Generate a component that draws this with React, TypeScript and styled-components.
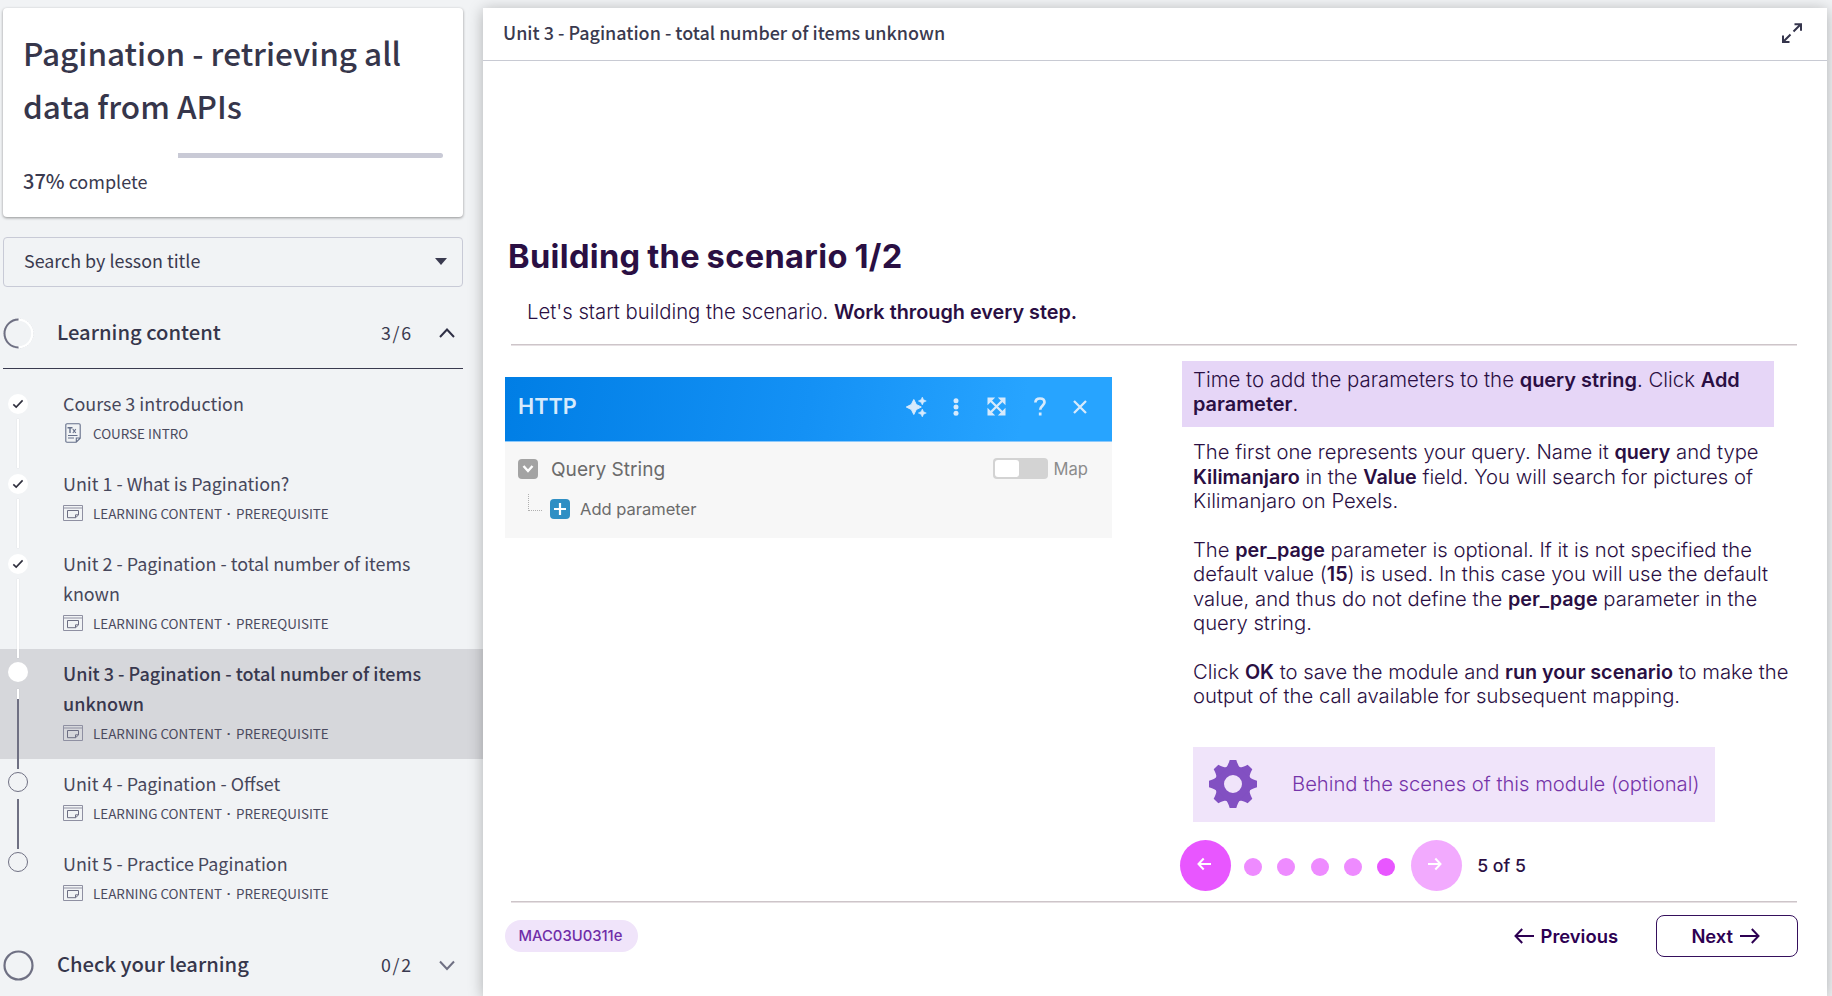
import React from "react";
import styled, { createGlobalStyle, css } from "styled-components";

const SANS = '"Noto Sans CJK SC", "Open Sans", sans-serif';
const INTER = 'Inter, "Liberation Sans", sans-serif';
const INK = "#3a3a4f";
const SLATE = "#6f7083";
const PLUM = "#2a0f43";
const MIST = "#f1f3f5";

const GlobalStyle = createGlobalStyle`
  * { box-sizing: border-box; }
  html, body, #root { height: 100%; }
  body { margin: 0; background: ${MIST}; overflow: hidden; }
  h1, h2, p { margin: 0; }
  svg { display: block; flex: none; }
`;

const Page = styled.div`
  display: flex;
  height: 996px;
  width: 1832px;
  padding: 8px 5px 0 0;
  overflow: hidden;
  color: ${INK};
  font-family: ${SANS};
`;

/* ---------- Sidebar ---------- */

const Sidebar = styled.aside`
  flex: none;
  width: 483px;
  display: flex;
  flex-direction: column;
  > * {
    flex: none;
  }
`;

const CourseCard = styled.section`
  width: 460px;
  height: 209px;
  margin-left: 3px;
  padding: 18px 20px 0 20px;
  background: #fff;
  border-radius: 4px;
  box-shadow: 0 1px 3px rgba(0, 0, 0, 0.4);
`;

const CourseTitle = styled.h1`
  font-size: 31.5px;
  line-height: 53px;
  font-weight: 500;
  color: #36364b;
  white-space: nowrap;
`;

const Progress = styled.div`
  display: flex;
  justify-content: flex-end;
  height: 5px;
  margin-top: 21px;
`;

const Remaining = styled.div`
  width: 265px;
  height: 5px;
  border-radius: 0 3px 3px 0;
  background: #c9cad6;
`;

const ProgressLabel = styled.p`
  margin-top: 8px;
  font-size: 18px;
  line-height: 30px;
  strong {
    font-size: 20px;
    font-weight: 500;
  }
`;

const Search = styled.div`
  display: flex;
  align-items: center;
  justify-content: space-between;
  width: 460px;
  height: 50px;
  margin: 20px 0 0 3px;
  padding: 0 15px 2px 20px;
  border: 1px solid #c8cad6;
  border-radius: 4px;
  font-size: 17.9px;
`;

const SearchLabel = styled.span`
  margin-bottom: 2px;
`;

const SectionHeader = styled.div<{ $open?: boolean }>`
  display: flex;
  align-items: center;
  width: 460px;
  padding-right: 8px;
  ${(p) =>
    p.$open
      ? css`
          height: 82px;
          margin: 0 0 10px 3px;
          padding-top: 11px;
          border-bottom: 1px solid ${INK};
        `
      : css`
          height: 60px;
          margin: 16px 0 0 3px;
        `}
`;

const SectionTitle = styled.h2`
  flex: 1;
  margin: 0 0 2px 23px;
  font-size: 20.2px;
  line-height: 30px;
  font-weight: 500;
  color: #36364b;
`;

const Count = styled.span`
  margin: 0 26px 2px 0;
  font-size: 17.8px;
  line-height: 30px;
  letter-spacing: 1.8px;
`;

const Lesson = styled.div<{ $active?: boolean }>`
  display: flex;
  width: 483px;
  padding: 9.5px 0 10.5px 8px;
  background: ${(p) => (p.$active ? "#d6d7db" : "transparent")};
`;

const Rail = styled.div`
  position: relative;
  flex: none;
  width: 20px;
  margin-right: 35px;
`;

const Marker = styled.div<{ $kind: "done" | "current" | "todo" }>`
  position: absolute;
  left: 0;
  top: ${(p) => (p.$kind === "done" ? 5.5 : 3)}px;
  width: 20px;
  height: 20px;
  display: grid;
  place-items: center;
  border-radius: 50%;
  background: ${(p) => (p.$kind === "todo" ? "transparent" : "#fff")};
  border: ${(p) => (p.$kind === "todo" ? `1px solid ${SLATE}` : "none")};
`;

const Connector = styled.div<{ $top: number; $length: number; $dark?: boolean }>`
  position: absolute;
  z-index: 1;
  left: 9px;
  top: ${(p) => p.$top}px;
  width: 2px;
  height: ${(p) => p.$length}px;
  background: ${(p) => (p.$dark ? SLATE : "#fff")};
  box-shadow: ${(p) => (p.$dark ? "none" : "0 0 1px rgba(90, 90, 110, 0.35)")};
`;

const LessonBody = styled.div`
  width: 375px;
  margin: -1px 0 1px;
`;

const LessonTitle = styled.div<{ $active?: boolean }>`
  font-size: ${(p) => (p.$active ? 18 : 17.92)}px;
  line-height: 30px;
  font-weight: ${(p) => (p.$active ? 500 : 400)};
  color: ${(p) => (p.$active ? "#38384e" : "#47475b")};
`;

const Meta = styled.div`
  display: flex;
  align-items: center;
  height: 30px;
  font-size: 13.43px;
  color: #4a4a5e;
  white-space: nowrap;
`;

const MetaIcon = styled.span`
  display: flex;
  justify-content: center;
  width: 20px;
  margin-right: 10px;
`;

const Dot = styled.span`
  width: 14px;
  padding-top: 2px;
  text-align: center;
  font-family: "Liberation Sans", sans-serif;
  font-weight: 700;
`;

/* ---------- Lesson panel ---------- */

const Panel = styled.main`
  position: relative;
  flex: 1;
  background: #fff;
  box-shadow: 0 2px 14px rgba(0, 0, 0, 0.28);
`;

const PanelHeader = styled.header`
  display: flex;
  align-items: center;
  justify-content: space-between;
  height: 53px;
  padding: 0 25px 3px 20px;
  border-bottom: 1px solid #c8cad3;
`;

const PanelTitle = styled.span`
  margin-bottom: 2px;
  font-size: 17.97px;
  font-weight: 500;
`;

const Slide = styled.div`
  padding: 175px 30px 0 22px;
  font-family: ${INTER};
  color: ${PLUM};
`;

const SlideTitle = styled.h2`
  padding-left: 3px;
  font-size: 32.6px;
  line-height: 40px;
  font-weight: 700;
  letter-spacing: 0.35px;
  word-spacing: -1.4px;
`;

const copy = css`
  font-size: 20.25px;
  line-height: 24.4px;
  font-weight: 300;
  white-space: nowrap;
  strong {
    font-weight: 600;
    font-size: 0.976em;
  }
`;

const Lead = styled.p`
  ${copy}
  margin: 23.5px 0 20px 22px;
  font-size: 20.31px;
`;

const Rule = styled.div`
  height: 2px;
  margin-left: 6px;
  background: #e6e0e3;
  border-top: 1px solid #cdc5c9;
`;

const Columns = styled.div`
  display: grid;
  grid-template-columns: 607px 1fr;
  column-gap: 70px;
  height: 555px;
`;

const Module = styled.section`
  margin-top: 31px;
  height: 161px;
  background: #f7f7f7;
  color: #6b6b6b;
`;

const ModuleBar = styled.div`
  display: flex;
  align-items: center;
  height: 65px;
  padding: 0 25px 5px 13px;
  background: linear-gradient(100deg, #007ee5 0%, #1491f5 50%, #27a4ff 85%, #27a4ff 100%);
  border-bottom: 1px solid #8cc9fb;
`;

const ModuleName = styled.span`
  flex: 1;
  font-size: 21.7px;
  font-weight: 600;
  color: #d6eafc;
`;

const ModuleTools = styled.div`
  display: flex;
  align-items: center;
  padding-top: 1px;
`;

const Tool = styled.span<{ $gap: number }>`
  margin-left: ${(p) => p.$gap}px;
`;

const QueryRow = styled.div`
  display: flex;
  align-items: center;
  height: 28px;
  margin-top: 13px;
  padding: 0 24px 0 13px;
  font-size: 19.1px;
`;

const QueryLabel = styled.span`
  flex: 1;
  margin-left: 13px;
`;

const Toggle = styled.span`
  width: 55px;
  height: 21px;
  margin-right: 6px;
  padding: 2px;
  border-radius: 4px;
  background: #d3d3d3;
  &::before {
    content: "";
    display: block;
    width: 24px;
    height: 17px;
    border-radius: 3px;
    background: #fff;
  }
`;

const MapLabel = styled.span`
  font-size: 16.6px;
  color: #8b8b8b;
`;

const AddRow = styled.div`
  display: flex;
  align-items: center;
  height: 24px;
  margin-top: 14px;
  padding-left: 23px;
  font-size: 16.5px;
`;

const Branch = styled.span`
  width: 14px;
  height: 17px;
  margin: 0 8px 12px 0;
  border: dotted #b0b0b0;
  border-width: 0 0 1px 1px;
`;

const AddLabel = styled.span`
  margin-left: 10px;
`;

const Square = styled.span<{ $color: string }>`
  display: grid;
  place-items: center;
  width: 20px;
  height: 20px;
  border-radius: 4px;
  background: ${(p) => p.$color};
`;

const Callout = styled.p`
  ${copy}
  width: 592px;
  height: 66px;
  margin-top: 15px;
  padding: 7px 11px;
  background: #e6d6f7;
  font-size: 20.42px;
`;

const Paragraph = styled.p`
  ${copy}
  margin: 13.5px 0 0 11px;
  & + & {
    margin-top: 24.4px;
  }
`;

const Behind = styled.div`
  display: flex;
  align-items: center;
  width: 522px;
  height: 75px;
  margin: 38px 0 0 11px;
  padding-left: 16px;
  background: #f0e4fa;
  color: #7534a9;
  font-size: 20.23px;
  font-weight: 300;
  white-space: nowrap;
`;

const BehindLabel = styled.span`
  margin: 0 0 1px 35px;
`;

const Pager = styled.div`
  display: flex;
  align-items: center;
  height: 51px;
  margin: 18px 0 0 -2.5px;
`;

const PagerButton = styled.span<{ $muted?: boolean }>`
  display: grid;
  place-items: center;
  width: 51px;
  height: 51px;
  padding: 0 3px 2px 0;
  border-radius: 50%;
  background: ${(p) => (p.$muted ? "#f2aafe" : "#e856ff")};
`;

const Steps = styled.div`
  display: flex;
  gap: 15.3px;
  margin: 3px 15.5px 0 13.5px;
`;

const Step = styled.span<{ $on?: boolean }>`
  width: 18px;
  height: 18px;
  border-radius: 50%;
  background: ${(p) => (p.$on ? "#e856ff" : "#ee8bff")};
`;

const PageCount = styled.span`
  margin-left: 15.5px;
  font-size: 17.7px;
  font-weight: 500;
`;

const Footer = styled.footer`
  display: flex;
  align-items: center;
  height: 67px;
`;

const Tag = styled.span`
  width: 133px;
  height: 32px;
  padding-right: 2px;
  border-radius: 16px;
  background: #f0e4fa;
  color: #6f2da8;
  font-size: 14.8px;
  line-height: 32px;
  font-weight: 500;
  text-align: center;
`;

const Previous = styled.span`
  display: flex;
  align-items: center;
  gap: 6.5px;
  margin: 0 38px 0 auto;
  font-size: 18.4px;
  font-weight: 600;
  color: #2d0052;
`;

const Next = styled(Previous)`
  justify-content: center;
  width: 142px;
  height: 42px;
  margin: 0 -1px 0 0;
  padding-right: 3px;
  border: 1.5px solid #35105c;
  border-radius: 8px;
`;

/* ---------- Icons ---------- */

const Check = () => (
  <svg width="12" height="12" viewBox="0 0 12 12" fill="none" stroke="#2f2f3d" strokeWidth="1.6">
    <path d="M1.3 6.3 4.2 9.1 10.6 2.4" />
  </svg>
);

const DocIcon = () => (
  <svg width="16" height="20" viewBox="0 0 16 20" fill="none" stroke="#66708a" strokeWidth="1.1">
    <path d="M2 .8h12q1.2 0 1.2 1.2v13.2l-4 4H2Q.8 19.2 .8 18V2Q.8.8 2 .8ZM15 15h-3.700v4" />
    <path d="M2.500 4.800h5M5 4.800v5.200" strokeWidth="1.400" />
    <path d="M7.800 6.200l3 3.800M10.800 6.200l-3 3.800M3 12.500h9.500M3 15h6" />
  </svg>
);

const ScreenIcon = () => (
  <svg width="20" height="16" viewBox="0 0 20 16" fill="none" stroke="#8f90a2" strokeWidth="1">
    <path d="M.5.5h19v15H.5ZM.5 3h19" />
    <path d="M4.500 5.500h11v4.500l-3 2.700h-8ZM15.500 9.800h-3v2.900" stroke="#6d6e83" />
  </svg>
);

const Chevron = ({ up }: { up?: boolean }) => (
  <svg width="16" height="11" viewBox="0 0 16 11" fill="none" stroke={up ? "#2f2f45" : SLATE} strokeWidth="2">
    <path d={up ? "M1 9 8 1.500l7 7.500" : "M1 1.500 8 9l7-7.500"} />
  </svg>
);

const HalfRing = () => (
  <svg width="31" height="31" viewBox="0 0 31 31" fill="none" strokeWidth="2">
    <circle cx="15.500" cy="15.500" r="14.600" stroke="#cfd1d8" strokeWidth="1" strokeDasharray="1 1.500" />
    <path d="M15.500 1.700a13.800 13.800 0 0 1 0 27.600" stroke="#fff" strokeWidth="2.200" />
    <path d="M15.500 1.500a14 14 0 0 0 0 28" stroke={SLATE} />
  </svg>
);

const Ring = () => (
  <svg width="31" height="31" viewBox="0 0 31 31" fill="none">
    <circle cx="15.500" cy="15.500" r="14" stroke={SLATE} strokeWidth="2.200" />
  </svg>
);

const Expand = () => (
  <svg width="20" height="20" viewBox="0 0 20 20" fill="none" stroke="#35354c" strokeWidth="2">
    <path d="M11.500 8.500 18.500 1.500M12.500 1.200H19V7.700M8.500 11.500 1.500 18.500M1 12.500V19H7.500" />
  </svg>
);

const Sparkles = () => (
  <svg width="21" height="20" viewBox="0 0 21 20" fill="#d6eafc">
    <path d="M7.800 2.500 10.300 7.500 15.300 10 10.300 12.500 7.800 17.500 5.300 12.500.3 10 5.300 7.500Z" stroke="#d6eafc" strokeLinejoin="round" />
    <path d="M16.300 0 17.600 2.700 20.300 4 17.600 5.300 16.300 8 15 5.300 12.300 4 15 2.700ZM16.300 12 17.600 14.700 20.300 16 17.600 17.300 16.300 20 15 17.300 12.300 16 15 14.700Z" stroke="#d6eafc" strokeWidth=".5" strokeLinejoin="round" />
  </svg>
);

const Dots = () => (
  <svg width="6" height="18" viewBox="0 0 6 18" fill="#d6eafc">
    <circle cx="3" cy="2.800" r="2.500" />
    <circle cx="3" cy="9" r="2.500" />
    <circle cx="3" cy="15.200" r="2.500" />
  </svg>
);

const Maximize = () => (
  <svg width="19" height="19" viewBox="0 0 19 19" fill="#d6eafc" stroke="#d6eafc" strokeWidth="2.300">
    <path d="M3 3 16 16M16 3 3 16" />
    <path d="M1.200 6.500V1.200H6.500ZM12.500 1.200h5.300V6.500ZM17.800 12.500v5.300H12.500ZM6.500 17.800H1.200V12.500Z" strokeWidth="1.400" />
  </svg>
);

const Question = () => (
  <svg width="12" height="19" viewBox="0 0 12 19" fill="none" stroke="#d6eafc" strokeWidth="2.700">
    <path d="M1.400 5.500C1.500 2.600 3.500 1.500 6 1.500c2.700 0 4.500 1.500 4.500 3.800C10.500 8.700 6.200 8.700 6.200 12.800M6.200 15.500v3" />
  </svg>
);

const Close = () => (
  <svg width="14" height="14" viewBox="0 0 14 14" fill="none" stroke="#d6eafc" strokeWidth="2.300">
    <path d="M1 1 13 13M13 1 1 13" />
  </svg>
);

const Gear = () => (
  <svg width="48" height="48" viewBox="-24 -24 48 48">
    <g fill="#8250c2">
      <path
        fillRule="evenodd"
        d="M0-18A18 18 0 1 1 0 18A18 18 0 1 1 0-18ZM0-9A9 9 0 1 0 0 9A9 9 0 1 0 0-9Z"
      />
      {[0, 45, 90, 135, 180, 225, 270, 315].map((angle) => (
        <path key={angle} transform={`rotate(${angle})`} d="M-7.500-16Q-5.200-17.500-3.300-24H3.300Q5.200-17.500 7.500-16Z" />
      ))}
    </g>
  </svg>
);

const Arrow = ({ left, size, color, weight }: { left?: boolean; size: number; color: string; weight: number }) => {
  const tip = size > 15 ? 7 : 5.5;
  return (
    <svg width={size} height="16" viewBox={`0 0 ${size} 16`} fill="none" stroke={color} strokeWidth={weight}>
      {left ? (
        <path d={`M1.500 8H${size}M${tip + 1.2} ${8 - tip} 1.500 8l${tip - 0.3} ${tip}`} />
      ) : (
        <path d={`M0 8H${size - 1.5}M${size - tip - 1.2} ${8 - tip} ${size - 1.5} 8l${0.3 - tip} ${tip}`} />
      )}
    </svg>
  );
};

/* ---------- Data ---------- */

type LessonData = {
  title: string;
  kind: "done" | "current" | "todo";
  intro?: boolean;
  lines: { top: number; length: number; dark?: boolean }[];
};

const lessons: LessonData[] = [
  { title: "Course 3 introduction", kind: "done", intro: true, lines: [{ top: 30.5, length: 49 }] },
  { title: "Unit 1 - What is Pagination?", kind: "done", lines: [{ top: 30.5, length: 49 }] },
  {
    title: "Unit 2 - Pagination - total number of items known",
    kind: "done",
    lines: [{ top: 30.5, length: 79 }],
  },
  {
    title: "Unit 3 - Pagination - total number of items unknown",
    kind: "current",
    lines: [
      { top: 30.5, length: 10 },
      { top: 40, length: 70, dark: true },
    ],
  },
  { title: "Unit 4 - Pagination - Offset", kind: "todo", lines: [{ top: 30.5, length: 50, dark: true }] },
  { title: "Unit 5 - Practice Pagination", kind: "todo", lines: [] },
];

export default function App() {
  return (
    <Page>
      <GlobalStyle />
      <Sidebar>
        <CourseCard>
          <CourseTitle>
            Pagination - retrieving all
            <br />
            data from APIs
          </CourseTitle>
          <Progress>
            <Remaining />
          </Progress>
          <ProgressLabel>
            <strong>37%</strong> complete
          </ProgressLabel>
        </CourseCard>
        <Search>
          <SearchLabel>Search by lesson title</SearchLabel>
          <svg width="12" height="7" viewBox="0 0 12 7">
            <path d="M0 0h12L6 7Z" fill={INK} />
          </svg>
        </Search>
        <SectionHeader $open>
          <HalfRing />
          <SectionTitle>Learning content</SectionTitle>
          <Count>3/6</Count>
          <Chevron up />
        </SectionHeader>
        {lessons.map((lesson) => {
          const active = lesson.kind === "current";
          return (
            <Lesson key={lesson.title} $active={active}>
              <Rail>
                <Marker $kind={lesson.kind}>{lesson.kind === "done" && <Check />}</Marker>
                {lesson.lines.map((line) => (
                  <Connector key={line.top} $top={line.top} $length={line.length} $dark={line.dark} />
                ))}
              </Rail>
              <LessonBody>
                <LessonTitle $active={active}>{lesson.title}</LessonTitle>
                <Meta>
                  <MetaIcon>{lesson.intro ? <DocIcon /> : <ScreenIcon />}</MetaIcon>
                  {lesson.intro ? (
                    "COURSE INTRO"
                  ) : (
                    <>
                      LEARNING CONTENT<Dot>·</Dot>PREREQUISITE
                    </>
                  )}
                </Meta>
              </LessonBody>
            </Lesson>
          );
        })}
        <SectionHeader>
          <Ring />
          <SectionTitle>Check your learning</SectionTitle>
          <Count>0/2</Count>
          <Chevron />
        </SectionHeader>
      </Sidebar>

      <Panel>
        <PanelHeader>
          <PanelTitle>Unit 3 - Pagination - total number of items unknown</PanelTitle>
          <Expand />
        </PanelHeader>
        <Slide>
          <SlideTitle>Building the scenario 1/2</SlideTitle>
          <Lead>
            Let's start building the scenario. <strong>Work through every step.</strong>
          </Lead>
          <Rule />
          <Columns>
            <Module>
              <ModuleBar>
                <ModuleName>HTTP</ModuleName>
                <ModuleTools>
                  <Tool $gap={0}><Sparkles /></Tool>
                  <Tool $gap={26}><Dots /></Tool>
                  <Tool $gap={28}><Maximize /></Tool>
                  <Tool $gap={28}><Question /></Tool>
                  <Tool $gap={27}><Close /></Tool>
                </ModuleTools>
              </ModuleBar>
              <QueryRow>
                <Square $color="#a3a3a3">
                  <svg width="12" height="10" viewBox="0 0 12 10" fill="none" stroke="#fff" strokeWidth="2.400">
                    <path d="M1.500 2 6 7l4.500-5" />
                  </svg>
                </Square>
                <QueryLabel>Query String</QueryLabel>
                <Toggle />
                <MapLabel>Map</MapLabel>
              </QueryRow>
              <AddRow>
                <Branch />
                <Square $color="#2f8fc4">
                  <svg width="12" height="12" viewBox="0 0 12 12" stroke="#fff" strokeWidth="2.200">
                    <path d="M6 0v12M0 6h12" />
                  </svg>
                </Square>
                <AddLabel>Add parameter</AddLabel>
              </AddRow>
            </Module>

            <div>
              <Callout>
                Time to add the parameters to the <strong>query string</strong>. Click <strong>Add</strong>
                <br />
                <strong>parameter</strong>.
              </Callout>
              <Paragraph>
                The first one represents your query. Name it <strong>query</strong> and type
                <br />
                <strong>Kilimanjaro</strong> in the <strong>Value</strong> field. You will search for pictures of
                <br />
                Kilimanjaro on Pexels.
              </Paragraph>
              <Paragraph>
                The <strong>per_page</strong> parameter is optional. If it is not specified the
                <br />
                default value (<strong>15</strong>) is used. In this case you will use the default
                <br />
                value, and thus do not define the <strong>per_page</strong> parameter in the
                <br />
                query string.
              </Paragraph>
              <Paragraph>
                Click <strong>OK</strong> to save the module and <strong>run your scenario</strong> to make the
                <br />
                output of the call available for subsequent mapping.
              </Paragraph>
              <Behind>
                <Gear />
                <BehindLabel>Behind the scenes of this module (optional)</BehindLabel>
              </Behind>
              <Pager>
                <PagerButton>
                  <Arrow left size={14} color="#fff" weight={2} />
                </PagerButton>
                <Steps>
                  <Step />
                  <Step />
                  <Step />
                  <Step />
                  <Step $on />
                </Steps>
                <PagerButton $muted>
                  <Arrow size={14} color="#fff" weight={2} />
                </PagerButton>
                <PageCount>5 of 5</PageCount>
              </Pager>
            </div>
          </Columns>
          <Rule />
          <Footer>
            <Tag>MAC03U0311e</Tag>
            <Previous>
              <Arrow left size={20} color="#2d0052" weight={2} />
              Previous
            </Previous>
            <Next>
              Next
              <Arrow size={20} color="#2d0052" weight={2} />
            </Next>
          </Footer>
        </Slide>
      </Panel>
    </Page>
  );
}
